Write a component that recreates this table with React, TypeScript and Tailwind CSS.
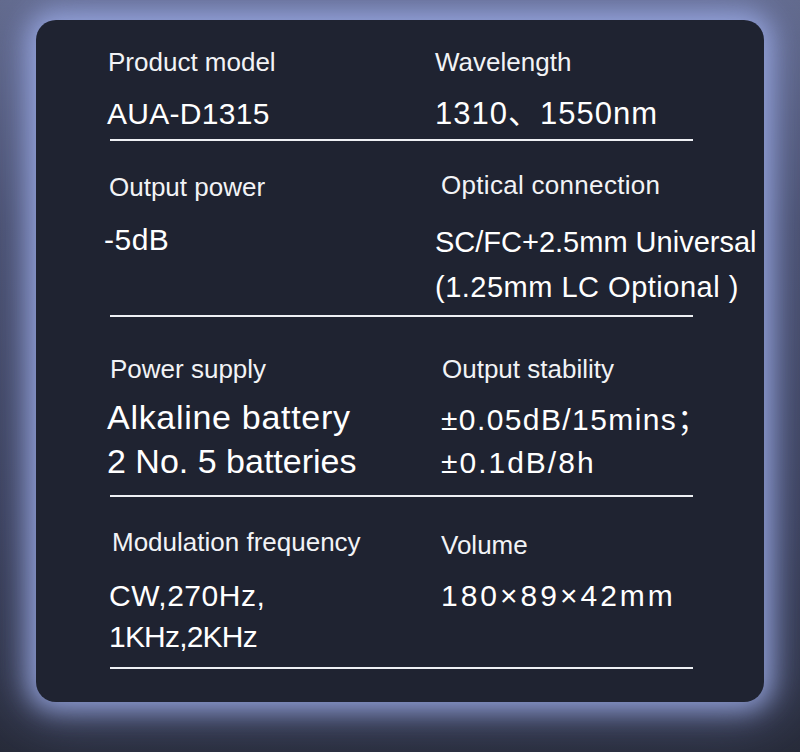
import React from "react";

const font = "font-['Liberation_Sans','Noto_Sans_CJK_SC',sans-serif]";

function Label({ children, className = "" }: { children: React.ReactNode; className?: string }) {
  return <div className={`h-8 text-[26px] leading-8 text-[#f2f3f6] whitespace-nowrap ${className}`}>{children}</div>;
}

function Divider() {
  return <div className="ml-[3px] h-[2px] w-[583px] bg-[#eef0f4]" />;
}

export default function App() {
  return (
    <div className={`w-[800px] h-[752px] overflow-hidden bg-[linear-gradient(180deg,#626a8c_0%,#464c69_30%,#353a52_70%,#262a38_100%)] pt-[20px] ${font}`}>
      <div className="ml-[36px] w-[728px] h-[682px] rounded-[20px] bg-[#1f2331] pl-[71px] shadow-[0_0_26px_8px_rgba(160,176,236,0.8),0_0_60px_20px_rgba(120,132,190,0.45)]">
        {/* Row 1 */}
        <div className="grid grid-cols-[328px_1fr] pt-[26px]">
          <div>
            <Label className="pl-[1px]">Product model</Label>
            <div className="mt-[18px] text-[30px] leading-[36px] text-white tracking-[0.3px]">AUA-D1315</div>
          </div>
          <div>
            <Label>Wavelength</Label>
            <div className="mt-[18px] text-[31px] leading-[36px] text-white tracking-[1px]">1310、1550nm</div>
          </div>
        </div>
        <div className="mt-[7px]">
          <Divider />
        </div>

        {/* Row 2 */}
        <div className="grid grid-cols-[328px_1fr] h-[174px]">
          <div className="pt-[30px]">
            <Label className="pl-[2px]">Output power</Label>
            <div className="mt-[19px] text-[30px] leading-[36px] text-white -ml-[3px] tracking-[0.5px]">-5dB</div>
          </div>
          <div className="pt-[28px]">
            <Label className="pl-[6px] tracking-[0.3px]">Optical connection</Label>
            <div className="mt-[19px] text-[29px] leading-[45px] text-white whitespace-nowrap">
              <div>SC/FC+2.5mm Universal</div>
              <div className="tracking-[0.5px]">(1.25mm LC Optional )</div>
            </div>
          </div>
        </div>
        <Divider />

        {/* Row 3 */}
        <div className="grid grid-cols-[328px_1fr] h-[178px]">
          <div className="pt-[36px]">
            <Label className="pl-[3px]">Power supply</Label>
            <div className="mt-[10px] text-[34px] leading-[44px] text-white whitespace-nowrap">
              <div className="tracking-[0.7px]">Alkaline battery</div>
              <div>2 No. 5 batteries</div>
            </div>
          </div>
          <div className="pt-[36px] pl-[6px]">
            <Label className="pl-[1px]">Output stability</Label>
            <div className="mt-[13px] text-[30px] leading-[43px] text-white whitespace-nowrap">
              <div className="tracking-[1.4px]">±0.05dB/15mins；</div>
              <div className="tracking-[2px]">±0.1dB/8h</div>
            </div>
          </div>
        </div>
        <Divider />

        {/* Row 4 */}
        <div className="grid grid-cols-[328px_1fr] h-[170px]">
          <div className="pt-[29px]">
            <Label className="pl-[5px]">Modulation frequency</Label>
            <div className="mt-[17px] text-[30px] leading-[41px] text-white whitespace-nowrap pl-[2px]">
              <div className="tracking-[0.5px]">CW,270Hz,</div>
              <div className="tracking-[-0.8px]">1KHz,2KHz</div>
            </div>
          </div>
          <div className="pt-[32px] pl-[6px]">
            <Label>Volume</Label>
            <div className="mt-[14px] text-[30px] leading-[41px] text-white whitespace-nowrap tracking-[3px]">180×89×42mm</div>
          </div>
        </div>
        <Divider />
      </div>
    </div>
  );
}
